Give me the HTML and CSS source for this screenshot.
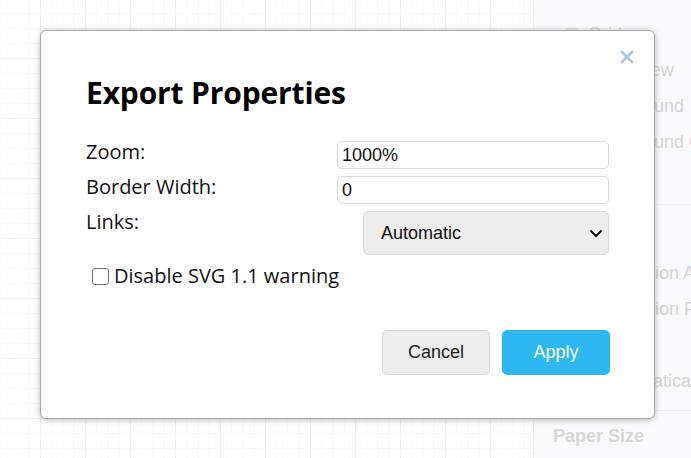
FILE: index.html
```html
<!DOCTYPE html>
<html lang="en">
<head>
<meta charset="utf-8">
<title>Export Properties</title>
<link rel="stylesheet" href="styles.css">
</head>
<body>
<div class="app">
  <div class="canvas"></div>
  <aside class="panel">
    <section class="section first">
      <div class="row"><span class="cb"></span><span>Grid</span></div>
      <div class="row"><span class="cb off"></span><span>Page View</span></div>
      <div class="row"><span class="cb off"></span><span>Background</span></div>
      <div class="row"><span class="cb off"></span><span>Background Color</span></div>
    </section>
    <section class="section second">
      <div class="row"><span class="cb off"></span><span>Connection Arrows</span></div>
      <div class="row"><span class="cb off"></span><span>Connection Points</span></div>
      <div class="row"><span class="cb off"></span><span>Guides</span></div>
      <div class="row"><span class="cb off"></span><span>Mathematical Typesetting</span></div>
    </section>
    <section class="section third">
      <div class="heading">Paper Size</div>
    </section>
  </aside>
</div>

<div class="dialog">
  <button class="close" aria-label="Close">
    <svg width="14" height="14" viewBox="0 0 14 14"><path d="M2 2 L12 12 M12 2 L2 12" stroke="#b3c3d8" stroke-width="2.6" stroke-linecap="round" fill="none"/></svg>
  </button>
  <h2 class="title">Export Properties</h2>
  <div class="form">
    <label class="lbl">Zoom:</label>
    <input class="field" type="text" value="1000%">
    <label class="lbl">Border Width:</label>
    <input class="field" type="text" value="0">
    <label class="lbl">Links:</label>
    <div class="select-wrap">
      <select class="select"><option>Automatic</option></select>
      <svg class="chev" width="14" height="9" viewBox="0 0 14 9"><path d="M1.5 1.5 L7 7 L12.5 1.5" stroke="#111" stroke-width="2" fill="none"/></svg>
    </div>
  </div>
  <label class="check"><input type="checkbox" class="box"><span>Disable SVG 1.1 warning</span></label>
  <div class="buttons">
    <button class="btn cancel">Cancel</button>
    <button class="btn apply">Apply</button>
  </div>
</div>
</body>
</html>
```
FILE: styles.css
```css
html, body {
  margin: 0;
  padding: 0;
}
body {
  width: 691px;
  height: 458px;
  overflow: hidden;
  font-family: "Liberation Sans", Arial, sans-serif;
  position: relative;
  background: #fff;
}
.app {
  display: flex;
  height: 458px;
}
.canvas {
  width: 533px;
  flex: none;
  background-color: #fff;
  background-image:
    linear-gradient(to right, #f0f0f0 1px, transparent 1px),
    linear-gradient(to bottom, #f0f0f0 1px, transparent 1px),
    linear-gradient(to right, #f8f8f8 1px, transparent 1px),
    linear-gradient(to bottom, #f8f8f8 1px, transparent 1px);
  background-size: 45px 60px, 45px 60px, 11.25px 15px, 11.25px 15px;
  background-position: 40px 58px, 40px 58px, 40px 58px, 40px 58px;
}
.panel {
  flex: 1;
  background: #f9fafb;
  border-left: 1px solid #eeeeee;
  color: #d4d4d4;
  font-size: 18px;
  white-space: nowrap;
  overflow: hidden;
}
.section {
  padding-left: 31px;
}
.section.first {
  padding-top: 16px;
  height: 188px;
  border-bottom: 1px solid #eeeeee;
}
.section.second {
  padding-top: 50px;
  height: 155px;
  border-bottom: 1px solid #eeeeee;
}
.section.third {
  padding-top: 15px;
  padding-left: 19px;
}
.row {
  height: 36px;
  display: flex;
  align-items: center;
  gap: 10px;
}
.cb {
  width: 13px;
  height: 13px;
  border-radius: 3px;
  background: #dbe6f4;
  flex: none;
}
.cb.off {
  background: transparent;
}
.heading {
  font-weight: bold;
  color: #d6d6d6;
  font-size: 18px;
}

/* dialog */
.dialog {
  position: absolute;
  left: 40px;
  top: 30px;
  width: 615px;
  height: 389px;
  background: #fff;
  border: 1px solid #a8a8a8;
  border-radius: 6px;
  box-shadow: 0 1px 6px rgba(0, 0, 0, 0.28);
  padding: 0 45px;
  box-sizing: border-box;
  font-family: "Open Sans", "Noto Sans", sans-serif;
  color: #111;
}
.close {
  position: absolute;
  right: 19px;
  top: 18px;
  width: 16px;
  height: 16px;
  padding: 0;
  border: none;
  background: none;
  display: flex;
  align-items: center;
  justify-content: center;
}
.title {
  margin: 44px 0 0;
  font-size: 30px;
  line-height: 36px;
  font-weight: 700;
  letter-spacing: -0.15px;
  color: #000;
}
.form {
  margin-top: 30px;
  display: grid;
  grid-template-columns: 251px 272px;
  row-gap: 7px;
  align-items: start;
}
.lbl {
  font-size: 20px;
  line-height: 22px;
  color: #111;
}
.field {
  width: 272px;
  height: 28px;
  box-sizing: border-box;
  border: 1px solid #d9d9d9;
  border-radius: 5px;
  padding: 0 4px;
  font-family: "Liberation Sans", Arial, sans-serif;
  font-size: 18px;
  color: #111;
  outline: none;
}
.select-wrap {
  position: relative;
  justify-self: end;
  width: 246px;
  height: 44px;
}
.select {
  appearance: none;
  -webkit-appearance: none;
  width: 100%;
  height: 100%;
  box-sizing: border-box;
  background: #ececec;
  border: 1px solid #dadada;
  border-radius: 5px;
  padding: 0 0 0 17px;
  font-family: "Liberation Sans", Arial, sans-serif;
  font-size: 18px;
  color: #111;
}
.chev {
  position: absolute;
  right: 6px;
  top: 18px;
  pointer-events: none;
}
.check {
  display: flex;
  align-items: center;
  margin-top: 7px;
  margin-left: 6px;
  font-size: 20px;
  line-height: 28px;
  gap: 5px;
}
.box {
  appearance: none;
  -webkit-appearance: none;
  width: 17px;
  height: 17px;
  margin: 0;
  border: 1px solid #6f6f6f;
  border-radius: 3px;
  background: #fff;
}
.buttons {
  display: flex;
  justify-content: flex-end;
  gap: 12px;
  margin-top: 40px;
  margin-right: -1px;
}
.btn {
  width: 108px;
  height: 45px;
  border-radius: 5px;
  font-family: "Liberation Sans", Arial, sans-serif;
  font-size: 18px;
  padding: 0;
}
.cancel {
  background: #ededed;
  border: 1px solid #d8d8d8;
  color: #222;
}
.apply {
  background: #2eb8f1;
  border: 1px solid #2eb8f1;
  color: #fff;
}
```
